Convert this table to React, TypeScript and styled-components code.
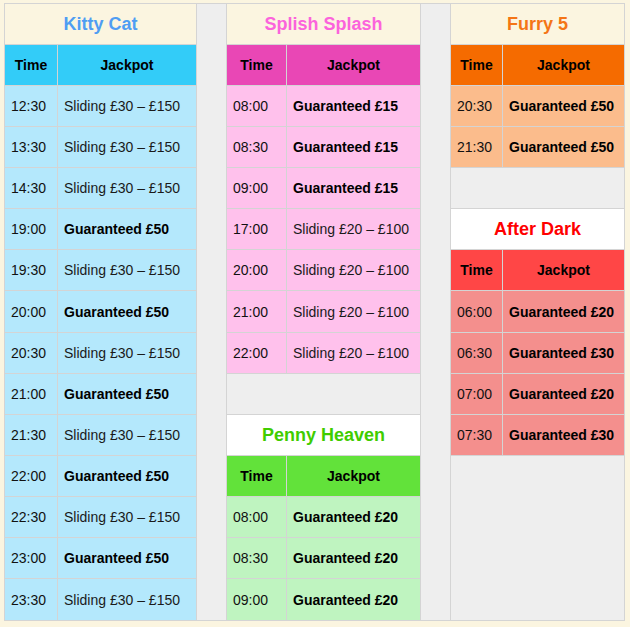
import React from "react";
import styled, { createGlobalStyle } from "styled-components";

const GlobalStyle = createGlobalStyle`
  html, body {
    margin: 0;
    padding: 0;
    background: #fbf5e0;
    font-family: "Liberation Sans", Arial, sans-serif;
  }
`;

type Theme = {
  title: string;
  head: string;
  row: string;
};

type Slot = { time: string; prize: string; bold?: boolean };

type Block = { name: string; theme: Theme; slots: Slot[]; white?: boolean };

const line = "#d4d4d4";

const themes: Record<string, Theme> = {
  kitty: { title: "#4f9df3", head: "#33ccf8", row: "#b4e8fc" },
  splish: { title: "#fb63dc", head: "#e947b5", row: "#ffc1ec" },
  penny: { title: "#3fcc00", head: "#62e23a", row: "#bff4c0" },
  furry: { title: "#f47516", head: "#f56b00", row: "#fbbc8c" },
  dark: { title: "#ff0000", head: "#ff4646", row: "#f48f8d" },
};

const sliding = (t: string, r: string): Slot => ({ time: t, prize: `Sliding ${r}` });
const fixed = (t: string, p: string): Slot => ({ time: t, prize: `Guaranteed ${p}`, bold: true });

const kitty: Block = {
  name: "Kitty Cat",
  theme: themes.kitty,
  slots: [
    sliding("12:30", "£30 – £150"),
    sliding("13:30", "£30 – £150"),
    sliding("14:30", "£30 – £150"),
    fixed("19:00", "£50"),
    sliding("19:30", "£30 – £150"),
    fixed("20:00", "£50"),
    sliding("20:30", "£30 – £150"),
    fixed("21:00", "£50"),
    sliding("21:30", "£30 – £150"),
    fixed("22:00", "£50"),
    sliding("22:30", "£30 – £150"),
    fixed("23:00", "£50"),
    sliding("23:30", "£30 – £150"),
  ],
};

const splish: Block = {
  name: "Splish Splash",
  theme: themes.splish,
  slots: [
    fixed("08:00", "£15"),
    fixed("08:30", "£15"),
    fixed("09:00", "£15"),
    sliding("17:00", "£20 – £100"),
    sliding("20:00", "£20 – £100"),
    sliding("21:00", "£20 – £100"),
    sliding("22:00", "£20 – £100"),
  ],
};

const penny: Block = {
  name: "Penny Heaven",
  theme: themes.penny,
  white: true,
  slots: [fixed("08:00", "£20"), fixed("08:30", "£20"), fixed("09:00", "£20")],
};

const furry: Block = {
  name: "Furry 5",
  theme: themes.furry,
  slots: [fixed("20:30", "£50"), fixed("21:30", "£50")],
};

const dark: Block = {
  name: "After Dark",
  theme: themes.dark,
  white: true,
  slots: [
    fixed("06:00", "£20"),
    fixed("06:30", "£30"),
    fixed("07:00", "£20"),
    fixed("07:30", "£30"),
  ],
};

const Page = styled.div`
  padding: 3px 0 6px 4px;
`;

const Board = styled.div`
  display: flex;
  width: max-content;
  border-top: 1px solid ${line};
  border-left: 1px solid ${line};
`;

// 15 rows shared by every column so that the lines meet across the board
const Column = styled.div<{ $time: number; $width: number }>`
  display: grid;
  grid-template-columns: ${(p) => p.$time}px 1fr;
  grid-template-rows: repeat(7, 41px) 42px repeat(6, 41px) 42px;
  width: ${(p) => p.$width}px;
`;

const Spacer = styled.div`
  width: 30px;
  box-sizing: border-box;
  background: #eeeeee;
  border-right: 1px solid ${line};
  border-bottom: 1px solid ${line};
`;

const Cell = styled.div`
  box-sizing: border-box;
  display: flex;
  align-items: center;
  min-height: 0;
  border-right: 1px solid ${line};
  border-bottom: 1px solid ${line};
  font-size: 14px;
  color: #111;
`;

const Title = styled(Cell)<{ $color: string; $white?: boolean }>`
  grid-column: span 2;
  justify-content: center;
  background: ${(p) => (p.$white ? "#ffffff" : "#fbf5e0")};
  color: ${(p) => p.$color};
  font-size: 18px;
  font-weight: bold;
`;

const Head = styled(Cell)<{ $bg: string }>`
  justify-content: center;
  background: ${(p) => p.$bg};
  font-weight: bold;
  color: #000;
`;

const Time = styled(Cell)<{ $bg: string }>`
  background: ${(p) => p.$bg};
  padding-left: 6px;
`;

const Prize = styled(Cell)<{ $bg: string; $bold?: boolean }>`
  background: ${(p) => p.$bg};
  padding-left: 6px;
  font-weight: ${(p) => (p.$bold ? "bold" : "normal")};
  color: ${(p) => (p.$bold ? "#000" : "#1a1a1a")};
`;

const Blank = styled(Cell)<{ $rows: number }>`
  grid-column: span 2;
  grid-row: span ${(p) => p.$rows};
  background: #eeeeee;
`;

const Schedule: React.FC<{ block: Block }> = ({ block }) => {
  const { theme } = block;
  return (
    <>
      <Title $color={theme.title} $white={block.white}>
        {block.name}
      </Title>
      <Head $bg={theme.head}>Time</Head>
      <Head $bg={theme.head}>Jackpot</Head>
      {block.slots.map((s, i) => (
        <React.Fragment key={i}>
          <Time $bg={theme.row}>{s.time}</Time>
          <Prize $bg={theme.row} $bold={s.bold}>
            {s.prize}
          </Prize>
        </React.Fragment>
      ))}
    </>
  );
};

export default function App() {
  return (
    <Page>
      <GlobalStyle />
      <Board>
        <Column $time={53} $width={192}>
          <Schedule block={kitty} />
        </Column>
        <Spacer />
        <Column $time={60} $width={194}>
          <Schedule block={splish} />
          <Blank $rows={1} />
          <Schedule block={penny} />
        </Column>
        <Spacer />
        <Column $time={52} $width={174}>
          <Schedule block={furry} />
          <Blank $rows={1} />
          <Schedule block={dark} />
          <Blank $rows={5} />
        </Column>
      </Board>
    </Page>
  );
}
